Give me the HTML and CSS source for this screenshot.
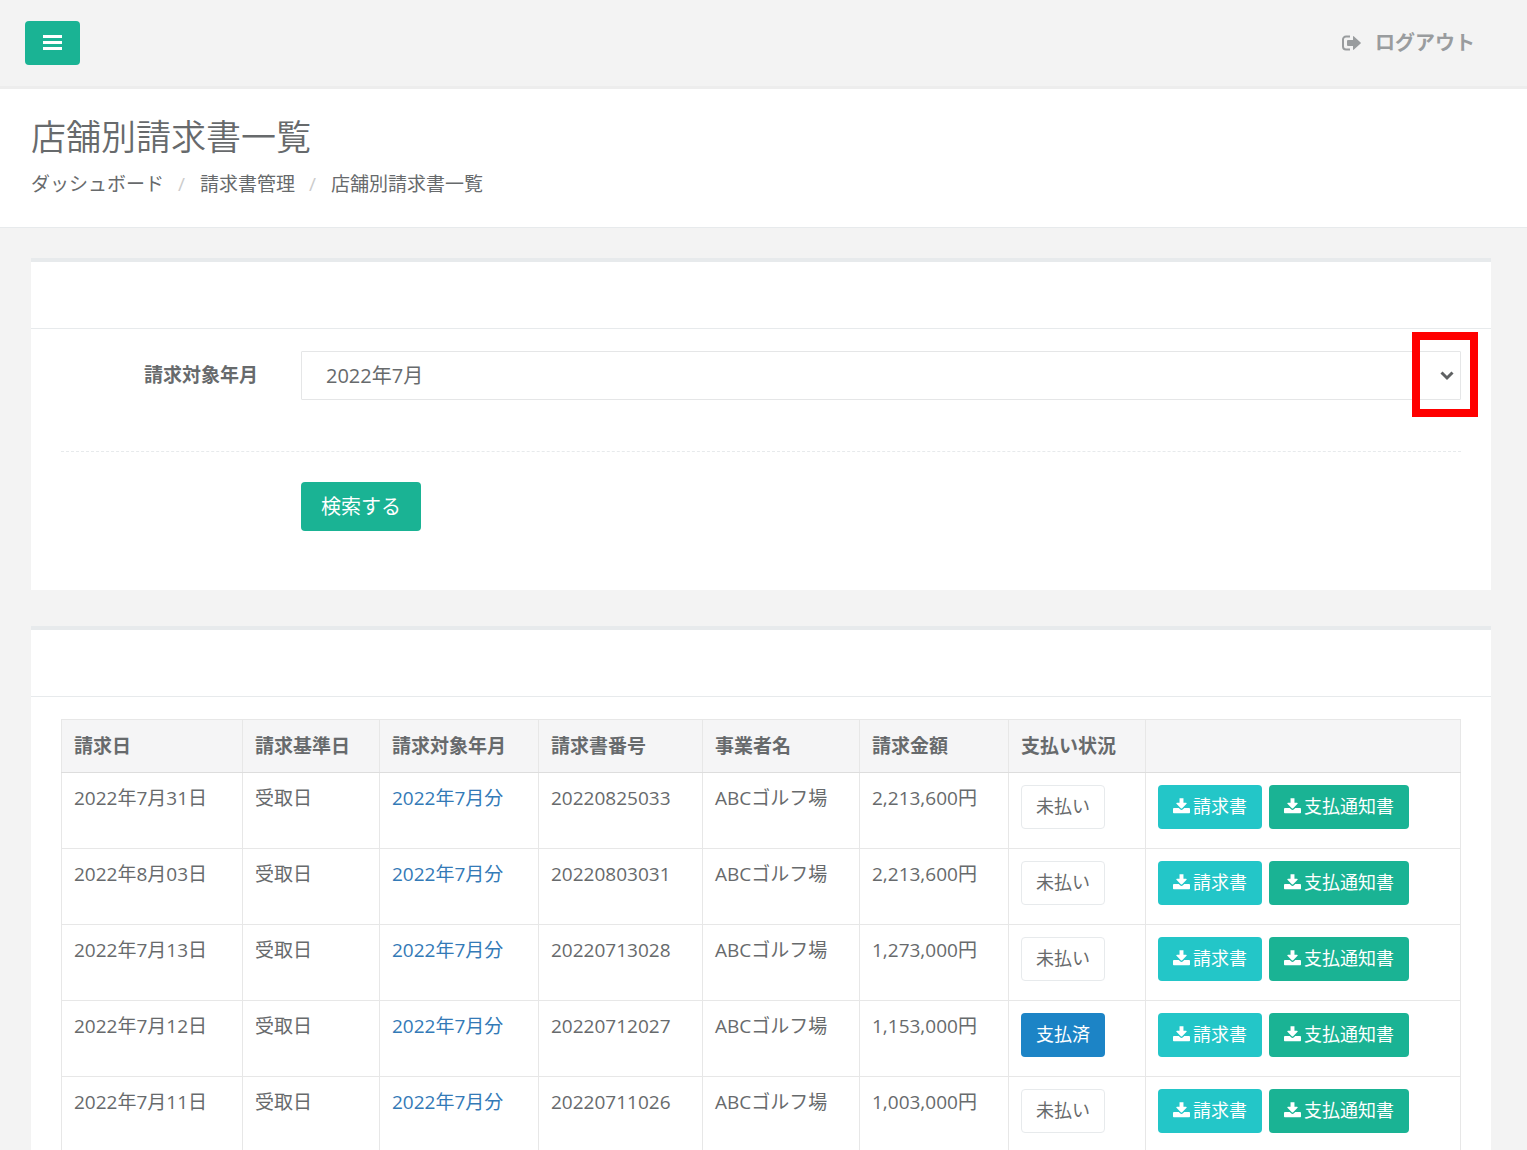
FILE: index.html
```html
<!DOCTYPE html>
<html lang="ja">
<head>
    <meta charset="UTF-8">
    <meta name="viewport" content="width=device-width, initial-scale=1.0">
    <title>店舗別請求書一覧</title>
    <link rel="stylesheet" href="styles.css">
</head>
<body>
    <!-- Shared icons -->
    <svg class="icon-defs" aria-hidden="true">
        <symbol id="icon-download" viewBox="0 -64 1664 1536">
            <path fill="currentColor" d="M1664 992v320q0 40-28 68t-68 28H96q-40 0-68-28t-28-68V992q0-40 28-68t68-28h465l135 136q58 56 136 56t136-56l136-136h464q40 0 68 28t28 68zm-325-569q17 41-14 70l-448 448q-18 19-45 19t-45-19L339 493q-31-29-14-70 17-39 59-39h256V-64h384v448h256q42 0 59 39z"/>
        </symbol>
    </svg>

    <nav class="navbar">
        <button type="button" class="btn btn-primary btn-menu" aria-label="メニュー">
            <svg width="19" height="16" viewBox="0 0 19 16" aria-hidden="true">
                <path fill="currentColor" d="M0 0h19v3H0zM0 6h19v3H0zM0 12h19v3H0z"/>
            </svg>
        </button>
        <a href="#" class="logout">
            <svg width="19" height="16" viewBox="0 0 19 16" aria-hidden="true">
                <path fill="none" stroke="currentColor" stroke-width="2" d="M8 1.5H4a3 3 0 0 0-3 3v7a3 3 0 0 0 3 3h4"/>
                <path fill="currentColor" d="M6 5h5V2q0-1.400 1-.6l6.600 6.100q.6.500 0 1L12 14.600q-1 .8-1-.6v-3H6q-1 0-1-1V6q0-1 1-1z"/>
            </svg>
            ログアウト
        </a>
    </nav>

    <header class="page-heading">
        <h1>店舗別請求書一覧</h1>
        <ol class="breadcrumb">
            <li><a href="#">ダッシュボード</a></li>
            <li><a href="#">請求書管理</a></li>
            <li>店舗別請求書一覧</li>
        </ol>
    </header>

    <main class="wrapper">
        <section class="ibox">
            <div class="ibox-title"></div>
            <form class="ibox-content search-form">
                <div class="form-row">
                    <label for="target-month">請求対象年月</label>
                    <div class="select-wrap">
                        <select id="target-month">
                            <option>2022年7月</option>
                        </select>
                        <svg class="chevron" width="14" height="10" viewBox="0 0 14 10" aria-hidden="true">
                            <path fill="none" stroke="currentColor" stroke-width="3" d="M1.500 1.500L7 7l5.500-5.500"/>
                        </svg>
                        <span class="highlight"></span>
                    </div>
                </div>
                <hr class="line-dashed">
                <div class="form-row">
                    <div class="form-action">
                        <button type="button" class="btn btn-primary btn-search">検索する</button>
                    </div>
                </div>
            </form>
        </section>

        <section class="ibox">
            <div class="ibox-title"></div>
            <div class="ibox-content">
                <table class="invoice-table">
                    <colgroup>
                        <col class="col-date">
                        <col class="col-base">
                        <col class="col-month">
                        <col class="col-number">
                        <col class="col-company">
                        <col class="col-amount">
                        <col class="col-status">
                        <col>
                    </colgroup>
                    <thead>
                        <tr>
                            <th>請求日</th>
                            <th>請求基準日</th>
                            <th>請求対象年月</th>
                            <th>請求書番号</th>
                            <th>事業者名</th>
                            <th>請求金額</th>
                            <th>支払い状況</th>
                            <th></th>
                        </tr>
                    </thead>
                    <tbody>
                        <tr>
                            <td>2022年7月31日</td>
                            <td>受取日</td>
                            <td><a href="#">2022年7月分</a></td>
                            <td>20220825033</td>
                            <td>ABCゴルフ場</td>
                            <td>2,213,600円</td>
                            <td><button type="button" class="btn btn-white">未払い</button></td>
                            <td>
                                <div class="actions">
                                    <button type="button" class="btn btn-info"><svg class="icon"><use href="#icon-download"/></svg>請求書</button>
                                    <button type="button" class="btn btn-primary"><svg class="icon"><use href="#icon-download"/></svg>支払通知書</button>
                                </div>
                            </td>
                        </tr>
                        <tr>
                            <td>2022年8月03日</td>
                            <td>受取日</td>
                            <td><a href="#">2022年7月分</a></td>
                            <td>20220803031</td>
                            <td>ABCゴルフ場</td>
                            <td>2,213,600円</td>
                            <td><button type="button" class="btn btn-white">未払い</button></td>
                            <td>
                                <div class="actions">
                                    <button type="button" class="btn btn-info"><svg class="icon"><use href="#icon-download"/></svg>請求書</button>
                                    <button type="button" class="btn btn-primary"><svg class="icon"><use href="#icon-download"/></svg>支払通知書</button>
                                </div>
                            </td>
                        </tr>
                        <tr>
                            <td>2022年7月13日</td>
                            <td>受取日</td>
                            <td><a href="#">2022年7月分</a></td>
                            <td>20220713028</td>
                            <td>ABCゴルフ場</td>
                            <td>1,273,000円</td>
                            <td><button type="button" class="btn btn-white">未払い</button></td>
                            <td>
                                <div class="actions">
                                    <button type="button" class="btn btn-info"><svg class="icon"><use href="#icon-download"/></svg>請求書</button>
                                    <button type="button" class="btn btn-primary"><svg class="icon"><use href="#icon-download"/></svg>支払通知書</button>
                                </div>
                            </td>
                        </tr>
                        <tr>
                            <td>2022年7月12日</td>
                            <td>受取日</td>
                            <td><a href="#">2022年7月分</a></td>
                            <td>20220712027</td>
                            <td>ABCゴルフ場</td>
                            <td>1,153,000円</td>
                            <td><button type="button" class="btn btn-success">支払済</button></td>
                            <td>
                                <div class="actions">
                                    <button type="button" class="btn btn-info"><svg class="icon"><use href="#icon-download"/></svg>請求書</button>
                                    <button type="button" class="btn btn-primary"><svg class="icon"><use href="#icon-download"/></svg>支払通知書</button>
                                </div>
                            </td>
                        </tr>
                        <tr>
                            <td>2022年7月11日</td>
                            <td>受取日</td>
                            <td><a href="#">2022年7月分</a></td>
                            <td>20220711026</td>
                            <td>ABCゴルフ場</td>
                            <td>1,003,000円</td>
                            <td><button type="button" class="btn btn-white">未払い</button></td>
                            <td>
                                <div class="actions">
                                    <button type="button" class="btn btn-info"><svg class="icon"><use href="#icon-download"/></svg>請求書</button>
                                    <button type="button" class="btn btn-primary"><svg class="icon"><use href="#icon-download"/></svg>支払通知書</button>
                                </div>
                            </td>
                        </tr>
                    </tbody>
                </table>
            </div>
        </section>
    </main>
</body>
</html>
```
FILE: styles.css
```css
* {
    box-sizing: border-box;
}

body {
    margin: 0;
    background: #f3f3f3;
    color: #676a6c;
    font-family: "Open Sans", "Noto Sans CJK JP", sans-serif;
    font-size: 19px;
    line-height: 27px;
}

a {
    color: inherit;
    text-decoration: none;
}

.icon-defs {
    display: none;
}

/* Buttons */
.btn {
    display: inline-flex;
    align-items: center;
    justify-content: center;
    gap: 3px;
    height: 44px;
    padding: 0 14px 2px;
    border: 1px solid transparent;
    border-radius: 4px;
    color: #fff;
    font-family: inherit;
    font-size: 18px;
    line-height: 27px;
    white-space: nowrap;
    cursor: pointer;
}

.btn-primary {
    background: #1ab394;
}

.btn-info {
    background: #23c6c8;
}

.btn-success {
    background: #1c84c6;
}

.btn-white {
    background: #fff;
    border-color: #e7eaec;
    color: #676a6c;
}

.btn-search {
    height: 49px;
    padding: 0 19px;
    font-size: 20px;
}

.icon {
    width: 17px;
    height: 16px;
}

/* Top bar */
.navbar {
    display: flex;
    align-items: center;
    justify-content: space-between;
    height: 89px;
    padding: 0 52px 1px 25px;
    border-bottom: 3px solid #ededed;
}

.btn-menu {
    width: 55px;
    padding-bottom: 0;
}

.logout {
    display: flex;
    align-items: center;
    gap: 14px;
    color: #999c9e;
    font-size: 20px;
    font-weight: 600;
}

/* Page heading */
.page-heading {
    padding: 26px 31px 29px;
    background: #fff;
    border-bottom: 1px solid #e7eaec;
}

h1 {
    margin: 0 0 12px;
    font-size: 35px;
    font-weight: 350;
    line-height: 44px;
}

.breadcrumb {
    display: flex;
    margin: 0;
    padding: 0;
    list-style: none;
}

.breadcrumb li + li::before {
    content: "/";
    padding: 0 15px 0 14px;
    color: #ccc;
}

/* Panels */
.wrapper {
    padding: 30px 36px 0 31px;
}

.ibox {
    margin-bottom: 36px;
    background: #fff;
    border-top: 4px solid #e7eaec;
}

.ibox-title {
    height: 66px;
}

.ibox-content {
    padding: 22px 30px 30px;
    border-top: 1px solid #e7eaec;
}

/* Search form */
.search-form {
    padding-bottom: 59px;
}

.form-row {
    display: grid;
    grid-template-columns: repeat(12, 1fr);
    column-gap: 40px;
}

.form-row label {
    grid-column: span 2;
    padding: 11px 3px 0 0;
    font-weight: 700;
    text-align: right;
}

.select-wrap {
    position: relative;
    grid-column: span 10;
}

select {
    display: block;
    width: 100%;
    height: 49px;
    padding: 0 24px;
    appearance: none;
    background: #fff;
    border: 1px solid #e5e6e7;
    border-radius: 1px;
    color: inherit;
    font-family: inherit;
    font-size: 20px;
}

.chevron {
    position: absolute;
    top: 20px;
    right: 7px;
    color: #5f6163;
    pointer-events: none;
}

.highlight {
    position: absolute;
    inset: -19px -17px -17px auto;
    width: 66px;
    border: 8px solid #f00;
    pointer-events: none;
}

.line-dashed {
    margin: 51px 0 30px;
    border: 0;
    border-top: 1px dashed #e7eaec;
}

.form-action {
    grid-column: 3 / span 10;
}

/* Invoice list */
.invoice-table {
    width: 100%;
    table-layout: fixed;
    border-collapse: collapse;
}

.col-date {
    width: 181px;
}

.col-base,
.col-status {
    width: 137px;
}

.col-month {
    width: 159px;
}

.col-number {
    width: 164px;
}

.col-company {
    width: 157px;
}

.col-amount {
    width: 149px;
}

.invoice-table th,
.invoice-table td {
    padding: 12px;
    border: 1px solid #e7e7e7;
    text-align: left;
    vertical-align: top;
}

.invoice-table th {
    background: #f5f5f6;
    border-bottom-color: #ddd;
    font-weight: 700;
    line-height: 28px;
}

.invoice-table a {
    color: #337ab7;
}

.invoice-table .btn {
    margin-bottom: 7px;
    vertical-align: top;
}

.actions {
    display: flex;
    gap: 7px;
}
```
